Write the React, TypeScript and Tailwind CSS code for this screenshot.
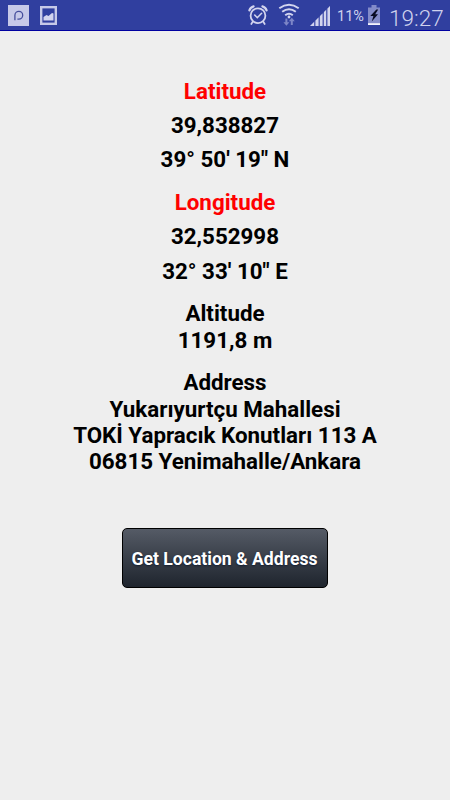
function Notifications() {
  return (
    <svg width="60" height="30" viewBox="0 0 60 30">
      <rect x="8" y="5" width="21" height="21" fill="#c6c9e8" />
      <path d="M14.9 20.2v-5a3.9 3.9 0 1 1 3.9 4h-1.4" fill="none" stroke="#454e9c" strokeWidth="1.3" />
      <rect x="41.2" y="7.2" width="14.6" height="16.6" fill="none" stroke="#c6c9e8" strokeWidth="2.4" />
      <path d="M43.5 20.5v-3.5l3-2 2 1 3.5-3 1.5.5v7z" fill="#d2d4ee" />
    </svg>
  );
}

function Alarm() {
  return (
    <svg width="20" height="22" viewBox="0 0 20 22" fill="none" stroke="#d2d4ee" strokeLinecap="round">
      <circle cx="10" cy="11.7" r="7.4" strokeWidth="1.8" />
      <path d="M1.4 6.4Q2.4 3.2 5.6 2.4M18.6 6.4Q17.6 3.2 14.4 2.4" strokeWidth="2.2" />
      <path d="M6.7 11l2.6 2.7 4.3-4.4" strokeWidth="1.6" />
      <path d="M4.7 17.7l-1.4 2.3M15.3 17.7l1.4 2.3" strokeWidth="1.7" />
    </svg>
  );
}

function Wifi() {
  return (
    <svg width="22" height="24" viewBox="0 0 22 24" fill="none">
      <path d="M1.3 5.2q9.7-7 19.4 0M4.2 8.8q6.8-5.2 13.6 0M7.2 12.2q3.8-3 7.6 0" stroke="#d2d4ee" strokeWidth="2" />
      <circle cx="11" cy="14" r="1.4" fill="#d2d4ee" />
      <path d="M8.4 15.5v5M13.8 22v-4" stroke="#7e86c7" strokeWidth="2" />
      <path d="M5.4 19.2h6l-3 3.6zM10.8 18.3h6l-3-3.6z" fill="#7e86c7" />
    </svg>
  );
}

function Signal() {
  return (
    <svg width="22" height="22" viewBox="0 0 22 22">
      <path d="M1 21L21 1v20z" fill="#5761b4" />
      <path d="M1 21l4-4v4zM6.5 21v-5.5l3-3V21zM11 21V11l2.5-2.5V21zM15 21V7l2-2v16zM18.5 21V3.5L21 1v20z" fill="#d2d4ee" />
    </svg>
  );
}

function Battery() {
  return (
    <svg width="14" height="21" viewBox="0 0 14 21">
      <path d="M4.5 0h5v2.5H13V20H1V2.5h3.5z" fill="#838bc9" />
      <path d="M1 18.2h12V20H1z" fill="#f3f3fc" />
      <path d="M9.4 4.5L3.3 11h3.1l-1.6 5.6 6.2-7.4H8.2l3-4.7z" fill="#090c25" />
    </svg>
  );
}

function Position({ title, decimal, degrees }: { title: string; decimal: string; degrees: string }) {
  return (
    <section className="flex flex-col items-center gap-[8px]">
      <h2 className="text-[#ff0000]">{title}</h2>
      <p>{decimal}</p>
      <p>{degrees}</p>
    </section>
  );
}

export default function App() {
  return (
    <div className="flex h-[800px] w-[450px] flex-col bg-[#eeeeee] font-['Roboto',sans-serif]">
      <header className="flex h-[31px] shrink-0 border-b border-[#0000a0] bg-[#303f9f] text-[#cfd2ed]">
        <Notifications />
        <div className="ml-auto flex h-[30px] items-start">
          <div className="mt-[4px]"><Alarm /></div>
          <div className="mt-[3px] ml-[10px]"><Wifi /></div>
          <div className="mt-[5px] ml-[9px]"><Signal /></div>
          <span className="mt-[7px] ml-[6px] w-[28px] text-[14.5px] leading-[20px] whitespace-nowrap">11%</span>
          <div className="mt-[5px] ml-[2px]"><Battery /></div>
          <span className="mt-[3px] mr-[6px] ml-[8px] w-[55px] text-[22.5px] leading-[30px] font-light whitespace-nowrap">19:27</span>
        </div>
      </header>
      <main className="flex flex-col items-center pt-[46.8px] text-center text-[22.35px] leading-[26.3px] font-bold text-black">
        <Position title="Latitude" decimal="39,838827" degrees={"39° 50' 19\" N"} />
        <div className="mt-[16.3px]">
          <Position title="Longitude" decimal="32,552998" degrees={"32° 33' 10\" E"} />
        </div>
        <section className="mt-[16.5px]">
          <h2>Altitude</h2>
          <p>1191,8 m</p>
        </section>
        <section className="mt-[16.5px]">
          <h2>Address</h2>
          <p>Yukarıyurtçu Mahallesi</p>
          <p>TOKİ Yapracık Konutları 113 A</p>
          <p>06815 Yenimahalle/Ankara</p>
        </section>
        <button className="mt-[53.4px] mr-px h-[60px] w-[206px] rounded-[5px] border border-black bg-linear-to-b from-[#555b66] to-[#1f252e] pt-px text-[17.6px] leading-[22px] whitespace-nowrap text-white [text-shadow:0_1px_2px_#101c30]">
          Get Location &amp; Address
        </button>
      </main>
    </div>
  );
}
